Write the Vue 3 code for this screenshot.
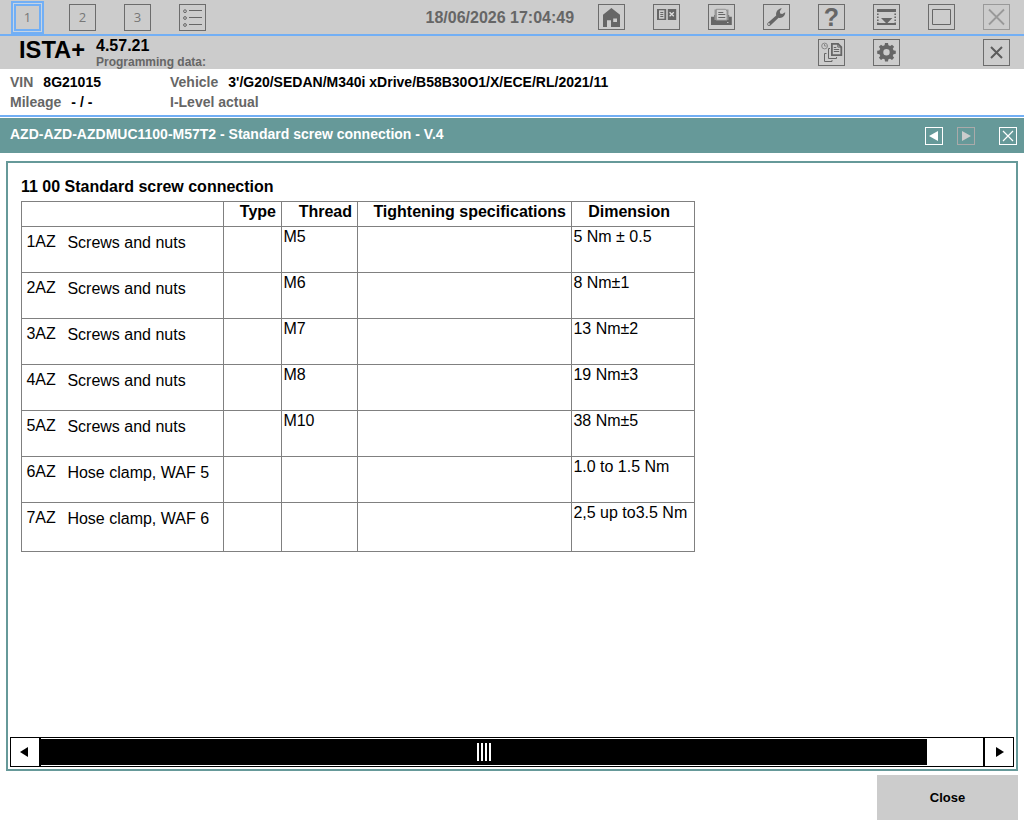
<template>
  <div class="app">
    <!-- Top bar -->
    <header class="top-bar">
      <div class="group">
        <button
          v-for="n in 3"
          :key="n"
          :class="['box tall number', { active: activeSession === n }]"
          @click="activeSession = n"
        >{{ n }}</button>
        <button class="box tall">
          <svg width="27" height="27" viewBox="0 0 27 27" fill="none" stroke="#666">
            <circle cx="6" cy="7.2" r="1.4" />
            <circle cx="6" cy="14" r="1.4" />
            <circle cx="6" cy="21" r="1.4" />
            <path d="M10 6.5h13M10 13.5h13M10 20.5h13" />
          </svg>
        </button>
      </div>

      <div class="clock">{{ clock }}</div>

      <div class="group">
        <!-- home -->
        <button class="box">
          <svg width="27" height="26" viewBox="0 0 27 26">
            <path fill="#666" fill-rule="evenodd" d="M13.4 4L22 10.8V23H13v-6.8H9V23H5V10.8zM15.2 14.5V18H19v-3.5z" />
          </svg>
        </button>
        <!-- documents -->
        <button class="box">
          <svg width="27" height="26" viewBox="0 0 27 26">
            <path fill="#666" d="M4 5h9.2v11H4zM14.8 5h8.4v11h-8.4z" />
            <path fill="#ccc" d="M6 6.3h5.4v8.4H6z" />
            <path stroke="#666" d="M7.3 8.5h3M7.3 10.5h3M7.3 12.5h3" />
            <path stroke="#ddd" stroke-width="1.3" d="M16.6 8.3l4.2 4M20.8 8.3l-4.2 4" />
          </svg>
        </button>
        <!-- printer -->
        <button class="box">
          <svg width="27" height="26" viewBox="0 0 27 26">
            <path fill="#666" d="M3 12.8h3V11h15.2v1.8h2.6V21H3z" />
            <path fill="#999" d="M6.5 5.5h14V16h-14z" />
            <path fill="#d0d0d0" stroke="#888" stroke-width=".8" d="M8.3 5.3h9.2L19 7v9.2H8.3z" />
            <path stroke="#666" d="M10.3 8.5h5M10.3 10.5h7M10.3 13.5h7" />
            <path stroke="#bbb" d="M19 18.5h1.5" />
          </svg>
        </button>
        <!-- wrench -->
        <button class="box">
          <svg width="27" height="26" viewBox="0 0 27 26">
            <path fill="#666" fill-rule="evenodd" d="M4.4 19.3L13.2 11.6C12.6 8 14.4 4.8 18.8 4.2L16.8 7.3L17.2 9.5L19.2 10L22.2 8.2C22.3 12 19 14.6 15.6 13.7L7.4 21.6C5.4 22.6 3.4 21 4.4 19.3zM5.8 19.3a.8.8 0 1 0 .1 1.5a.8.8 0 1 0-.1-1.5z" />
          </svg>
        </button>
        <button class="box help">?</button>
        <!-- hide panel -->
        <button class="box">
          <svg width="27" height="26" viewBox="0 0 27 26">
            <path fill="#666" d="M4 5h19v3H4zM4 19h19v2H4zM8 14h11.4l-5.7 5.7z" />
            <path stroke="#666" stroke-width="1.6" stroke-dasharray="1.6 1.4" d="M4.8 9.5v10M22.2 9.5v10" />
          </svg>
        </button>
        <!-- window -->
        <button class="box">
          <svg width="27" height="26" viewBox="0 0 27 26">
            <path fill="none" stroke="#666" d="M4.5 5.5h18v15h-18z" />
          </svg>
        </button>
        <button class="box disabled">
          <svg width="27" height="26" viewBox="0 0 27 26">
            <path stroke="#999" stroke-width="1.8" d="M6 5.5l15 15M21 5.5l-15 15" />
          </svg>
        </button>
      </div>
    </header>

    <!-- Program title -->
    <section class="title-bar">
      <div class="brand">ISTA+</div>
      <div class="version">
        <div class="version-number">4.57.21</div>
        <div class="version-data">Programming data:</div>
      </div>
      <div class="title-actions">
        <button class="box tall">
          <svg width="27" height="27" viewBox="0 0 27 27" fill="none" stroke="#666">
            <circle cx="6.6" cy="7" r="2.9" stroke="#888" />
            <path stroke="#888" d="M6.5 5v2h2" />
            <path fill="#ccc" stroke-width="1.8" d="M13.9 4.8h6.2l3.2 3.2v8.2h-9.4z" />
            <path d="M19.8 4.5v3.6h3.6M15.8 8.5h2.5M15.8 10.5h5.4M15.8 12.5h5.4" />
            <path d="M12 9.5h-1.5v10h8V18M8.5 14.5h-2v8h7.5V21" />
          </svg>
        </button>
        <button class="box tall">
          <svg width="27" height="27" viewBox="0 0 27 27">
            <circle cx="13.5" cy="13.3" r="5.2" fill="none" stroke="#666" stroke-width="4" />
            <path
              v-for="a in 8"
              :key="a"
              fill="#666"
              d="M11.4 7.5l.6-3.5h3l.6 3.5z"
              :transform="`rotate(${a * 45} 13.5 13.3)`"
            />
          </svg>
        </button>
        <button class="box tall last">
          <svg width="27" height="27" viewBox="0 0 27 27">
            <path stroke="#5c5c5c" stroke-width="2" d="M8 8l11 11M19 8l-11 11" />
          </svg>
        </button>
      </div>
    </section>

    <!-- Vehicle data -->
    <section class="vehicle">
      <div class="vehicle-left">
        <div><span class="label">VIN</span><span class="vin">8G21015</span></div>
        <div><span class="label">Mileage</span><span class="mileage">- / -</span></div>
      </div>
      <div>
        <div><span class="label">Vehicle</span><span class="model">3'/G20/SEDAN/M340i xDrive/B58B30O1/X/ECE/RL/2021/11</span></div>
        <div><span class="label">I-Level actual</span></div>
      </div>
    </section>

    <section class="doc-bar">
      <h1>AZD-AZD-AZDMUC1100-M57T2 - Standard screw connection - V.4</h1>
      <button class="nav">
        <svg width="18" height="18"><path fill="#fff" d="M13 4v10L4 9z" /></svg>
      </button>
      <button class="nav next">
        <svg width="18" height="18"><path fill="#ccc" d="M5 4v10l9-5z" /></svg>
      </button>
      <button class="nav">
        <svg width="18" height="18"><path stroke="#fff" stroke-width="1.2" d="M4 4l10 10M14 4L4 14" /></svg>
      </button>
    </section>

    <main class="document">
      <div class="content">
        <h2>11 00 Standard screw connection</h2>
        <table>
          <colgroup>
            <col class="c-name"><col class="c-type"><col class="c-thread"><col class="c-spec"><col class="c-dim">
          </colgroup>
          <thead>
            <tr>
              <th></th>
              <th>Type</th>
              <th>Thread</th>
              <th>Tightening specifications</th>
              <th class="dim-head">Dimension</th>
            </tr>
          </thead>
          <tbody>
            <tr v-for="row in rows" :key="row.code">
              <td>
                <div class="name">
                  <span class="code">{{ row.code }}</span>
                  <span class="text">{{ row.name }}</span>
                </div>
              </td>
              <td></td>
              <td>{{ row.thread }}</td>
              <td></td>
              <td>{{ row.dimension }}</td>
            </tr>
          </tbody>
        </table>
      </div>

      <div class="scrollbar">
        <button class="arrow left">
          <svg width="28" height="28"><path d="M17 9v10l-8-5z" /></svg>
        </button>
        <div class="track">
          <div class="thumb"><i v-for="g in 4" :key="g"></i></div>
        </div>
        <button class="arrow right">
          <svg width="28" height="28"><path d="M11 9v10l8-5z" /></svg>
        </button>
      </div>
    </main>

    <footer>
      <button class="close">Close</button>
    </footer>
  </div>
</template>

<script setup>
import { ref } from 'vue';

const activeSession = ref(1);
const clock = ref('18/06/2026 17:04:49');

const rows = [
  { code: '1AZ', name: 'Screws and nuts', thread: 'M5', dimension: '5 Nm ± 0.5' },
  { code: '2AZ', name: 'Screws and nuts', thread: 'M6', dimension: '8 Nm±1' },
  { code: '3AZ', name: 'Screws and nuts', thread: 'M7', dimension: '13 Nm±2' },
  { code: '4AZ', name: 'Screws and nuts', thread: 'M8', dimension: '19 Nm±3' },
  { code: '5AZ', name: 'Screws and nuts', thread: 'M10', dimension: '38 Nm±5' },
  { code: '6AZ', name: 'Hose clamp, WAF 5', thread: '', dimension: '1.0 to 1.5 Nm' },
  { code: '7AZ', name: 'Hose clamp, WAF 6', thread: '', dimension: '2,5 up to3.5 Nm' },
];
</script>

<style>
body {
  margin: 0;
  background: #fff;
}
</style>

<style scoped>
.app {
  display: flex;
  flex-direction: column;
  width: 1024px;
  height: 823px;
  overflow: hidden;
  font-family: 'Liberation Sans', Arial, sans-serif;
  color: #000;
  background: #fff;
}

.app * {
  box-sizing: border-box;
}

button {
  padding: 0;
  border: none;
  background: none;
  font-family: inherit;
}

svg {
  display: block;
}

.top-bar {
  display: flex;
  justify-content: space-between;
  height: 36px;
  padding: 4px 14px 0;
  background: #ccc;
  border-bottom: 2px solid #72aff5;
}

.group {
  display: flex;
  gap: 28px;
}

.clock {
  width: 150px;
  margin-left: 197px;
  font-size: 16px;
  font-weight: bold;
  line-height: 27px;
  color: #666;
  white-space: nowrap;
}

.box {
  flex: none;
  width: 27px;
  height: 26px;
  box-shadow: inset 0 0 0 1px #6c6c6c;
}

.box.tall {
  height: 27px;
}

.box.disabled {
  box-shadow: inset 0 0 0 1px #999;
}

.number {
  font-family: 'Open Sans', sans-serif;
  font-size: 13px;
  line-height: 27px;
  color: #777;
}

.number.active {
  box-shadow: inset 0 0 0 2px #72aff5, 0 0 0 1px #c6d4e4, 0 0 0 3px #72aff5;
}

.help {
  font-size: 25px;
  font-weight: bold;
  line-height: 27px;
  color: #666;
}

.title-bar {
  display: flex;
  height: 33px;
  background: #ccc;
}

.brand {
  width: 77px;
  padding-left: 19px;
  font-size: 23.7px;
  font-weight: bold;
  line-height: 28px;
}

.version {
  margin-left: 19px;
  padding-top: 1px;
  font-weight: bold;
}

.version-number {
  font-size: 16px;
  line-height: 18px;
}

.version-data {
  font-size: 12px;
  line-height: 14px;
  color: #666;
}

.title-actions {
  display: flex;
  gap: 28px;
  margin-left: auto;
  padding: 3px 14px 0 0;
}

.title-actions .last {
  margin-left: 55px;
}

.vehicle {
  display: flex;
  height: 48px;
  padding: 3px 10px 0;
  font-size: 14px;
  font-weight: bold;
  line-height: 20px;
  border-bottom: 2px solid #72aff5;
}

.vehicle-left {
  width: 160px;
}

.label {
  color: #666;
}

.vin,
.mileage,
.model {
  margin-left: 10px;
}

.doc-bar {
  display: flex;
  height: 35px;
  margin-top: 1px;
  padding: 9px 7px 0 10px;
  background: #669999;
}

.doc-bar h1 {
  margin: -1px auto 0 0;
  font-size: 14px;
  line-height: 16px;
  color: #fff;
}

.nav {
  width: 18px;
  height: 18px;
  box-shadow: inset 0 0 0 1px #fff;
}

.nav.next {
  margin: 0 24px 0 14px;
  box-shadow: inset 0 0 0 1px #aaa;
}

.document {
  display: flex;
  flex-direction: column;
  height: 610px;
  margin: 8px 6px 0;
  padding: 0 2px 2px;
  border: 2px solid #669999;
}

.content {
  flex: 1;
  padding: 15px 0 0 11px;
}

h2 {
  margin: 0;
  font-size: 16px;
  line-height: 18px;
}

table {
  width: 674px;
  margin-top: 5px;
  table-layout: fixed;
  border-collapse: separate;
  border-spacing: 0;
  border-top: 1px solid #808080;
  border-left: 1px solid #808080;
  font-size: 16px;
  line-height: 18px;
}

.c-name { width: 202px; }
.c-type { width: 58px; }
.c-thread { width: 76px; }
.c-spec { width: 214px; }
.c-dim { width: 123px; }

th,
td {
  padding: 1px;
  border-right: 1px solid #808080;
  border-bottom: 1px solid #808080;
  vertical-align: top;
}

th {
  height: 25px;
  padding-right: 5px;
  text-align: right;
}

th.dim-head {
  padding-right: 24px;
}

td {
  height: 46px;
  padding-left: 1.4px;
}

tr:last-child td {
  height: 49px;
}

.name {
  display: flex;
  padding: 5px 0 0 3px;
}

.code {
  width: 41px;
}

.text {
  padding-top: 1px;
}

.scrollbar {
  display: flex;
  height: 30px;
  border: 1px solid #000;
}

.arrow {
  flex: none;
  width: 30px;
}

.arrow.left {
  border-right: 2px solid #000;
}

.arrow.right {
  border-left: 2px solid #000;
}

.track {
  flex: 1;
  padding: 1px 56px 1px 0;
}

.thumb {
  display: flex;
  justify-content: center;
  align-items: center;
  gap: 2px;
  height: 26px;
  background: #000;
}

.thumb i {
  width: 2px;
  height: 18px;
  background: #fff;
}

footer {
  display: flex;
  justify-content: flex-end;
  padding: 4px 6px 0;
}

.close {
  width: 141px;
  height: 45px;
  font-size: 13px;
  font-weight: bold;
  background: #ccc;
}
</style>
